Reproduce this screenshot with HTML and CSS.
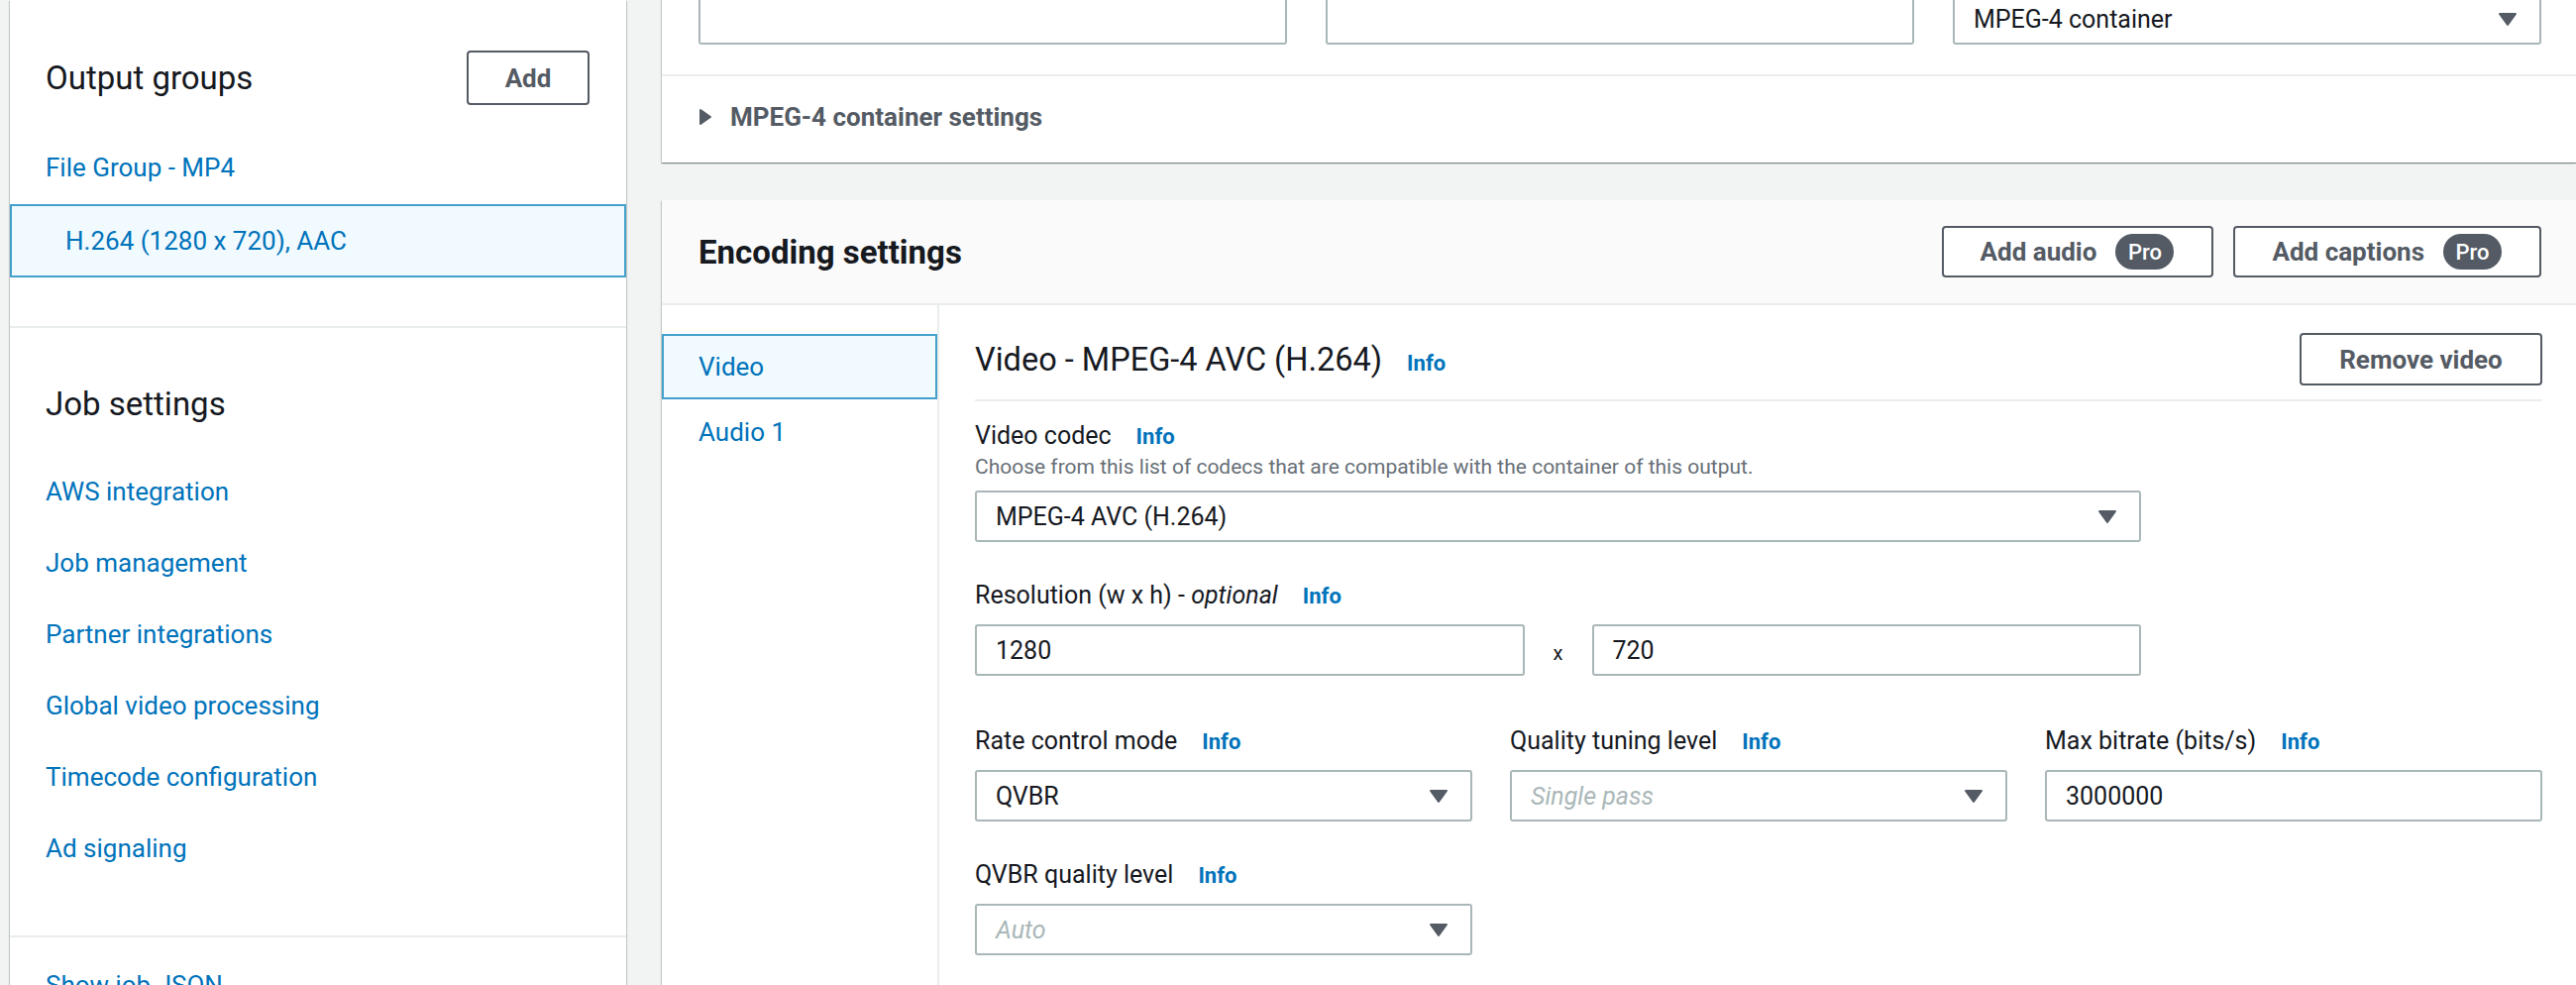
FILE: index.html
```html
<!DOCTYPE html>
<html lang="en">
<head>
<meta charset="utf-8">
<title>Create job - Encoding settings</title>
<link rel="stylesheet" href="styles.css">
</head>
<body>
<div class="page">
  <aside class="side">
    <div class="side-output">
      <div class="side-head">
        <h2 class="side-title">Output groups</h2>
        <button class="btn btn-add">Add</button>
      </div>
      <a class="side-link group-link">File Group - MP4</a>
      <div class="side-item selected">H.264 (1280 x 720), AAC</div>
    </div>
    <div class="side-job">
      <h2 class="side-title">Job settings</h2>
      <nav class="side-nav">
        <a class="side-link">AWS integration</a>
        <a class="side-link">Job management</a>
        <a class="side-link">Partner integrations</a>
        <a class="side-link">Global video processing</a>
        <a class="side-link">Timecode configuration</a>
        <a class="side-link">Ad signaling</a>
      </nav>
    </div>
    <div class="side-json">
      <a class="side-link">Show job JSON</a>
    </div>
  </aside>

  <main class="main">
    <section class="panel panel-top">
      <div class="top-fields">
        <div class="control"></div>
        <div class="control"></div>
        <div class="control select"><span>MPEG-4 container</span><svg class="arrow" width="20" height="15" viewBox="0 0 20 15"><path d="M2 2h16L10 13z" fill="#545b64" stroke="#545b64" stroke-width="2" stroke-linejoin="round"/></svg></div>
      </div>
      <div class="expander">
        <svg class="caret" width="14" height="18" viewBox="0 0 14 18"><path d="M2 2v14l10-7z" fill="#545b64" stroke="#545b64" stroke-width="2" stroke-linejoin="round"/></svg>
        <span>MPEG-4 container settings</span>
      </div>
    </section>

    <section class="panel panel-enc">
      <header class="enc-head">
        <h2 class="enc-title">Encoding settings</h2>
        <div class="btns">
          <button class="btn btn-pro">Add audio<span class="pro">Pro</span></button>
          <button class="btn btn-pro">Add captions<span class="pro">Pro</span></button>
        </div>
      </header>
      <div class="enc-body">
        <nav class="tabs">
          <a class="tab active">Video</a>
          <a class="tab">Audio 1</a>
        </nav>
        <div class="enc-content">
          <div class="sec-head">
            <h3 class="sec-title">Video - MPEG-4 AVC (H.264)<a class="info">Info</a></h3>
            <button class="btn btn-remove">Remove video</button>
          </div>

          <div class="field f-codec narrow">
            <div class="label">Video codec<a class="info">Info</a></div>
            <div class="desc">Choose from this list of codecs that are compatible with the container of this output.</div>
            <div class="control select"><span>MPEG-4 AVC (H.264)</span><svg class="arrow" width="20" height="15" viewBox="0 0 20 15"><path d="M2 2h16L10 13z" fill="#545b64" stroke="#545b64" stroke-width="2" stroke-linejoin="round"/></svg></div>
          </div>

          <div class="field f-res narrow">
            <div class="label">Resolution (w x h) - <em>optional</em><a class="info">Info</a></div>
            <div class="res-row">
              <div class="control"><span>1280</span></div>
              <span class="times">x</span>
              <div class="control"><span>720</span></div>
            </div>
          </div>

          <div class="grid3 f-rate">
            <div class="field">
              <div class="label">Rate control mode<a class="info">Info</a></div>
              <div class="control select"><span>QVBR</span><svg class="arrow" width="20" height="15" viewBox="0 0 20 15"><path d="M2 2h16L10 13z" fill="#545b64" stroke="#545b64" stroke-width="2" stroke-linejoin="round"/></svg></div>
            </div>
            <div class="field">
              <div class="label">Quality tuning level<a class="info">Info</a></div>
              <div class="control select"><span class="placeholder">Single pass</span><svg class="arrow" width="20" height="15" viewBox="0 0 20 15"><path d="M2 2h16L10 13z" fill="#545b64" stroke="#545b64" stroke-width="2" stroke-linejoin="round"/></svg></div>
            </div>
            <div class="field">
              <div class="label">Max bitrate (bits/s)<a class="info">Info</a></div>
              <div class="control"><span>3000000</span></div>
            </div>
          </div>

          <div class="grid3 f-qvbr">
            <div class="field">
              <div class="label">QVBR quality level<a class="info">Info</a></div>
              <div class="control select"><span class="placeholder">Auto</span><svg class="arrow" width="20" height="15" viewBox="0 0 20 15"><path d="M2 2h16L10 13z" fill="#545b64" stroke="#545b64" stroke-width="2" stroke-linejoin="round"/></svg></div>
            </div>
          </div>
        </div>
      </div>
    </section>
  </main>
</div>
</body>
</html>
```

FILE: styles.css
```css
* { box-sizing: border-box; }

html, body {
  margin: 0;
  padding: 0;
}

body {
  width: 2600px;
  height: 994px;
  overflow: hidden;
  background: #f2f3f3;
  font-family: Roboto, "Noto Sans", "Liberation Sans", sans-serif;
  color: #16191f;
}

a { cursor: pointer; }

.page {
  display: flex;
  align-items: flex-start;
  gap: 36px;
  padding-left: 10px;
  height: 994px;
  overflow: hidden;
}

/* ---------- Left panel ---------- */
.side {
  flex: none;
  width: 622px;
  height: 994px;
  overflow: hidden;
  background: #fff;
  box-shadow: 0 1px 1px 0 rgba(0, 28, 36, 0.3), 1px 1px 1px 0 rgba(0, 28, 36, 0.15), -1px 1px 1px 0 rgba(0, 28, 36, 0.15);
}

.side-title {
  margin: 0;
  font-size: 33px;
  font-weight: 400;
  line-height: 44px;
  color: #16191f;
}

.side-output {
  padding-top: 51px;
  padding-bottom: 49px;
  border-bottom: 2px solid #eaeded;
}

.side-head {
  display: flex;
  align-items: center;
  justify-content: space-between;
  height: 55px;
  padding: 0 37px 0 36px;
}

.side-link {
  display: block;
  font-size: 26px;
  line-height: 36px;
  color: #0073bb;
}

.group-link {
  margin-top: 45px;
  padding-left: 36px;
}

.side-item {
  display: flex;
  align-items: center;
  margin-top: 19px;
  height: 74px;
  padding-left: 56px;
  font-size: 26px;
  color: #0073bb;
}

.side-item.selected {
  border: 2px solid #44a0cc;
  background: #f1faff;
  padding-left: 54px;
}

.side-job {
  padding: 55px 0 70px 36px;
  border-bottom: 2px solid #eaeded;
}

.side-nav {
  display: flex;
  flex-direction: column;
  gap: 36px;
  margin-top: 48px;
}

.side-json {
  padding: 30px 0 0 36px;
}

/* ---------- Buttons ---------- */
.btn {
  display: inline-flex;
  align-items: center;
  justify-content: center;
  height: 52px;
  padding: 0 38px 0 37px;
  border: 2px solid #545b64;
  border-radius: 4px;
  background: #fff;
  font-family: Roboto, "Noto Sans", "Liberation Sans", sans-serif;
  font-size: 26px;
  font-weight: 700;
  color: #545b64;
}

.btn-add {
  width: 124px;
  height: 55px;
  padding: 0;
}

.btn-remove {
  width: 245px;
  height: 53px;
  padding: 0;
}

.pro {
  display: inline-flex;
  align-items: center;
  justify-content: center;
  width: 59px;
  height: 36px;
  margin-left: 19px;
  border-radius: 18px;
  background: #545b64;
  color: #fff;
  font-size: 22px;
  font-weight: 500;
}

/* ---------- Main ---------- */
.main {
  flex: 1;
  min-width: 0;
}

.panel {
  background: #fff;
  box-shadow: 0 1px 1px 0 rgba(0, 28, 36, 0.3), 1px 1px 1px 0 rgba(0, 28, 36, 0.15), -1px 1px 1px 0 rgba(0, 28, 36, 0.15);
}

.panel-top {
  margin-top: -7px;
}

.top-fields {
  display: grid;
  grid-template-columns: repeat(3, 1fr);
  gap: 39px;
  padding: 0 35px 30px 37px;
  border-bottom: 2px solid #eaeded;
}

.expander {
  display: flex;
  align-items: center;
  gap: 18px;
  padding: 23px 37px 28px;
  font-size: 26px;
  line-height: 36px;
  font-weight: 700;
  color: #545b64;
}

.panel-enc {
  margin-top: 38px;
}

.enc-head {
  display: flex;
  align-items: center;
  justify-content: space-between;
  height: 106px;
  padding: 0 35px 0 37px;
  background: #fafafa;
  border-bottom: 2px solid #eaeded;
}

.enc-title {
  margin: 0;
  font-size: 33px;
  font-weight: 700;
  color: #16191f;
}

.btns {
  display: flex;
  gap: 20px;
}

.enc-body {
  display: flex;
  min-height: 760px;
}

.tabs {
  flex: none;
  width: 280px;
  padding-top: 29px;
  border-right: 2px solid #eaeded;
}

.tab {
  display: flex;
  align-items: center;
  height: 66px;
  padding-left: 37px;
  font-size: 26px;
  color: #0073bb;
}

.tab.active {
  border: 2px solid #44a0cc;
  background: #f1faff;
  padding-left: 35px;
}

.enc-content {
  flex: 1;
  min-width: 0;
  padding: 28px 34px 0 36px;
}

.sec-head {
  display: flex;
  align-items: center;
  justify-content: space-between;
  padding-bottom: 14px;
  border-bottom: 2px solid #eaeded;
}

.sec-title {
  margin: 0;
  font-size: 32.5px;
  font-weight: 400;
  color: #16191f;
}

.info {
  margin-left: 25px;
  font-size: 22px;
  font-weight: 700;
  color: #0073bb;
}

.label {
  font-size: 25px;
  line-height: 32px;
  color: #16191f;
}

.desc {
  font-size: 21px;
  line-height: 28px;
  color: #687078;
}

.control {
  display: flex;
  align-items: center;
  height: 52px;
  padding: 0 22px 0 19px;
  border: 2px solid #aab7b8;
  border-radius: 3px;
  background: #fff;
  font-size: 25px;
  color: #16191f;
}

.control .arrow {
  margin-left: auto;
  flex: none;
}

.placeholder {
  font-style: italic;
  color: #aab7b8;
}

.field .label + .control,
.field .label + .res-row {
  margin-top: 12px;
}

.field .desc + .control {
  margin-top: 10px;
}

.narrow {
  width: 1177px;
}

.f-codec { margin-top: 19px; }
.f-res { margin-top: 38px; }
.f-rate { margin-top: 50px; }
.f-qvbr { margin-top: 38px; }

.res-row {
  display: flex;
  align-items: center;
}

.res-row .control {
  flex: 1;
}

.times {
  width: 68px;
  text-align: center;
  font-size: 20px;
  padding-top: 6px;
  color: #16191f;
}

.grid3 {
  display: grid;
  grid-template-columns: repeat(3, 1fr);
  gap: 38px;
}
```
